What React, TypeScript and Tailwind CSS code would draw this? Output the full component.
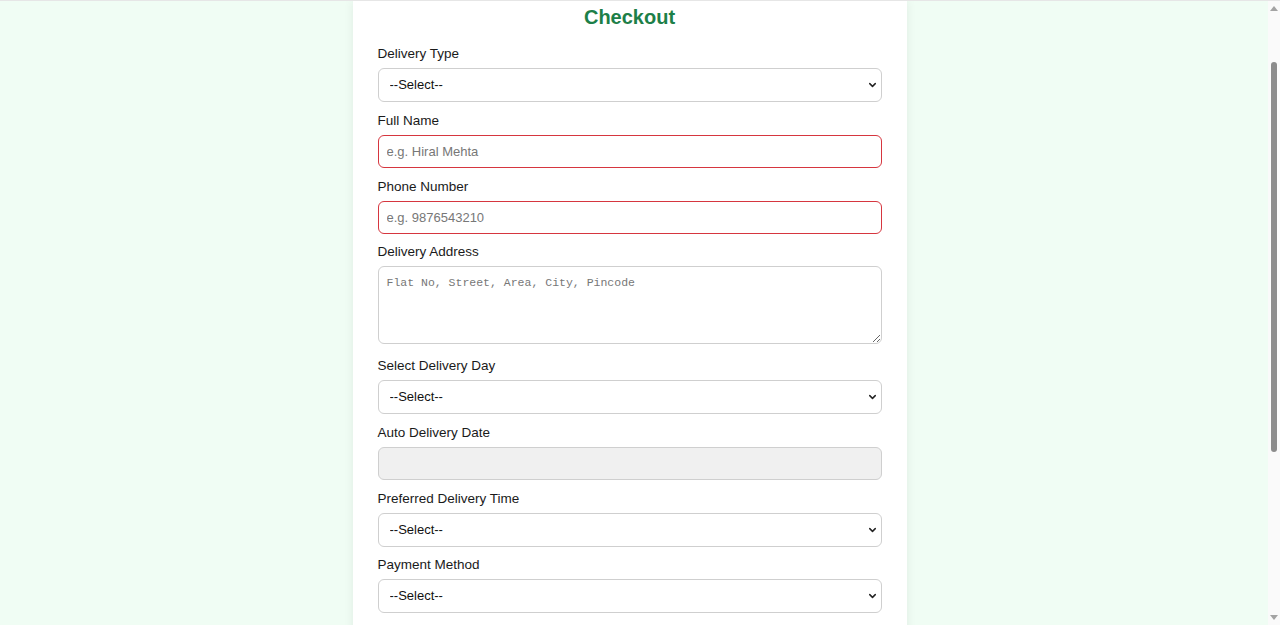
import { ChevronDown } from "lucide-react";

const sans = { fontFamily: '"Liberation Sans", Arial, sans-serif' };

function Label({ children, className = "mb-[6px]" }: { children: string; className?: string }) {
  return (
    <label className={`block pt-[1px] text-[13.5px] leading-[16px] text-[#1a1a1a] ${className}`}>{children}</label>
  );
}

function SelectBox({ className = "mb-[10px]" }: { className?: string }) {
  return (
    <div className={`relative ${className}`}>
      <select
        defaultValue=""
        className="block h-[34px] w-full appearance-none rounded-[6px] border border-[#cfcfcf] bg-white pl-[11px] pr-8 text-[13px] text-[#111] outline-none"
      >
        <option value="">--Select--</option>
      </select>
      <ChevronDown
        size={11}
        strokeWidth={3.2}
        className="pointer-events-none absolute right-[4px] top-1/2 -translate-y-1/2 text-[#222]"
      />
    </div>
  );
}

function TextInput({
  placeholder,
  className = "mb-[10px]",
  invalid = false,
  disabled = false,
}: {
  placeholder?: string;
  className?: string;
  invalid?: boolean;
  disabled?: boolean;
}) {
  return (
    <input
      placeholder={placeholder}
      disabled={disabled}
      className={`block h-[33px] w-full rounded-[6px] border px-[8px] text-[13px] text-[#111] outline-none placeholder:text-[#777] ${
        invalid ? "border-[#d6363f]" : "border-[#cfcfcf]"
      } ${disabled ? "bg-[#f0f0f0]" : "bg-white"} ${className}`}
    />
  );
}

export default function App() {
  return (
    <div className="flex h-[625px] overflow-hidden border-t border-[#e6e6e6] bg-[#f0fdf4]" style={sans}>
      <main className="flex flex-1 justify-center pr-[9px]">
        <div className="h-[640px] w-[554px] bg-white px-[25px] pt-[4px] shadow-[0_0_10px_rgba(0,0,0,0.07)]">
          <h2 className="mb-[16px] text-center text-[20px] font-bold leading-[24px] text-[#1d7f48]">Checkout</h2>

          <Label>Delivery Type</Label>
          <SelectBox />

          <Label>Full Name</Label>
          <TextInput placeholder="e.g. Hiral Mehta" invalid />

          <Label>Phone Number</Label>
          <TextInput placeholder="e.g. 9876543210" invalid className="mb-[9px]" />

          <Label>Delivery Address</Label>
          <textarea
            placeholder="Flat No, Street, Area, City, Pincode"
            className="mb-[13px] block h-[78px] w-full rounded-[6px] border border-[#cfcfcf] bg-white px-[8px] py-[9px] text-[11.5px] leading-[14px] outline-none placeholder:text-[#777]"
            style={{ fontFamily: '"Liberation Mono", "Courier New", monospace' }}
          />

          <Label>Select Delivery Day</Label>
          <SelectBox />

          <Label>Auto Delivery Date</Label>
          <TextInput disabled />

          <Label>Preferred Delivery Time</Label>
          <SelectBox className="mb-[9px]" />

          <Label>Payment Method</Label>
          <SelectBox />
        </div>
      </main>

      {/* window scrollbar */}
      <div className="flex w-[12px] flex-col items-center bg-[#fafafa]">
        <div className="mt-[5px] h-0 w-0 border-x-[4px] border-b-[5px] border-x-transparent border-b-[#a3a3a3]" />
        <div className="mt-[51px] h-[390px] w-[6px] rounded-full bg-[#8c8c8c]" />
        <div className="flex-1" />
        <div className="mb-[5px] h-0 w-0 border-x-[4px] border-t-[5px] border-x-transparent border-t-[#a3a3a3]" />
      </div>
    </div>
  );
}
